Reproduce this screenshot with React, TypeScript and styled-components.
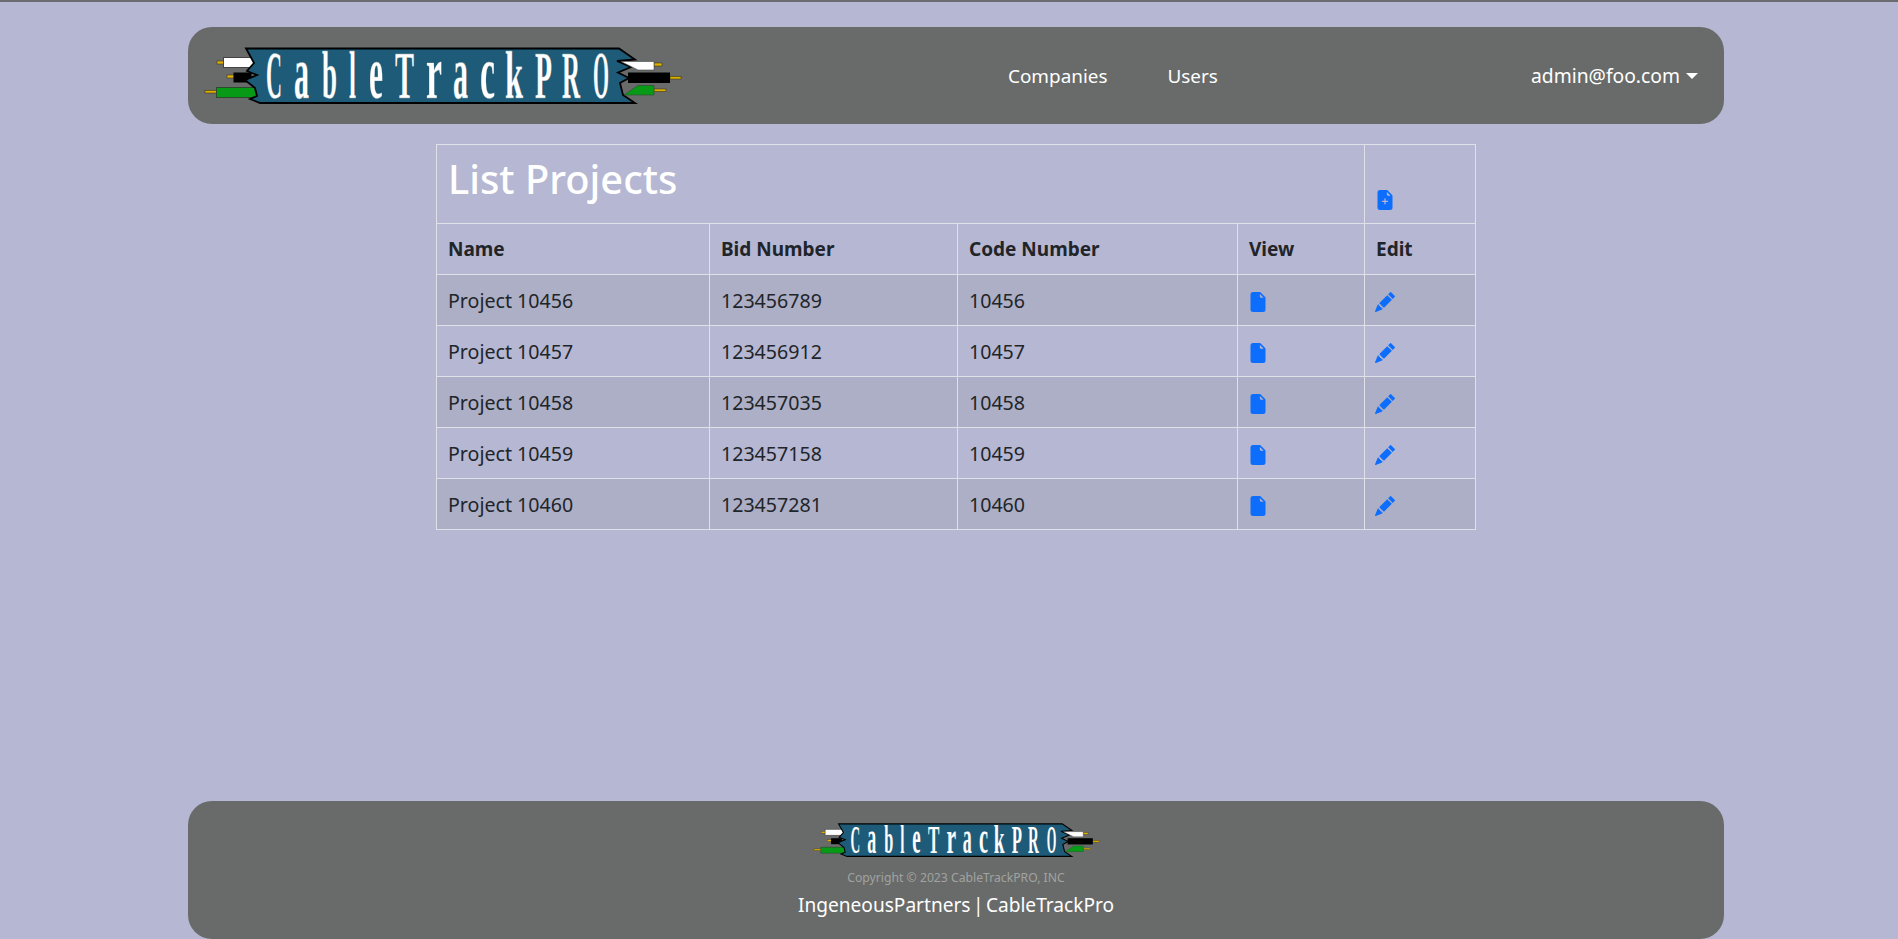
import styled, { createGlobalStyle } from "styled-components";
import { BsFileEarmarkFill, BsFileEarmarkPlusFill, BsPencilFill } from "react-icons/bs";

const GlobalStyles = createGlobalStyle`
  html, body {
    margin: 0;
    padding: 0;
    background: #b6b7d3;
    font-family: "Noto Sans", "Open Sans", sans-serif;
    color: #212529;
  }
  * {
    box-sizing: border-box;
  }
`;

const Page = styled.div`
  width: 1536px;
  height: 939px;
  margin-left: 188px;
  display: flex;
  flex-direction: column;
  align-items: center;
`;

const TopLine = styled.div`
  position: absolute;
  top: 0;
  left: 0;
  right: 0;
  height: 2px;
  background: #6b6c70;
`;

const Navbar = styled.nav`
  width: 100%;
  height: 97px;
  margin-top: 27px;
  padding: 0 26px 0 17px;
  background: #696b6a;
  border-radius: 24px;
  display: flex;
  align-items: center;
`;

const NavLinks = styled.div`
  display: flex;
  gap: 60px;
  margin-left: 326px;
`;

const NavLink = styled.a`
  color: #fff;
  font-size: 18.9px;
  text-decoration: none;
`;

const UserMenu = styled.a`
  margin-left: auto;
  color: #fff;
  font-size: 19.3px;
  display: flex;
  align-items: center;
  gap: 6px;
`;

const Caret = styled.span`
  width: 0;
  height: 0;
  border-top: 6px solid #fff;
  border-left: 6px solid transparent;
  border-right: 6px solid transparent;
`;

const Table = styled.table`
  width: 1039px;
  margin-top: 20px;
  border-collapse: collapse;
  table-layout: fixed;
  font-size: 19.6px;
`;

const Col = styled.col<{ $w: number }>`
  width: ${(p) => p.$w}px;
`;

const Cell = styled.td`
  height: 51px;
  padding: 0 11px;
  border: 1px solid #dfe1e8;
  vertical-align: middle;
`;

const HeadCell = styled(Cell).attrs({ as: "th" })`
  text-align: left;
  font-size: 19px;
  font-weight: 700;
`;

const IconCell = styled(Cell)`
  padding: 9px 10px 0;
`;

const TitleCell = styled(Cell)`
  height: 79px;
  vertical-align: top;
  padding-top: 10px;
`;

const AddCell = styled(Cell)`
  height: 79px;
  vertical-align: bottom;
  padding: 0 10px 7px;
`;

const Title = styled.h1`
  margin: 0;
  color: #fff;
  font-size: 39.8px;
  font-weight: 500;
  line-height: 48px;
`;

const Row = styled.tr<{ $striped: boolean }>`
  background: ${(p) => (p.$striped ? "#adafc6" : "transparent")};
`;

const IconLink = styled.a`
  display: inline-flex;
  color: #0d6efd;
  font-size: 20px;
`;

const Footer = styled.footer`
  width: 100%;
  height: 138px;
  margin-top: auto;
  padding-top: 22px;
  background: #696b6a;
  border-radius: 24px;
  display: flex;
  flex-direction: column;
  align-items: center;
`;

const FooterLogo = styled.div`
  margin-left: 2px;
`;

const Copyright = styled.div`
  margin-top: 12px;
  color: #a0a3a0;
  font-size: 12.2px;
  line-height: 18px;
`;

const FooterLinks = styled.div`
  margin-top: 5px;
  color: #fff;
  font-size: 19.1px;
  word-spacing: -2.5px;
  line-height: 26px;
`;

const LogoSvg = styled.svg<{ $w: number; $h: number }>`
  display: block;
  width: ${(p) => p.$w}px;
  height: ${(p) => p.$h}px;
  flex-shrink: 0;
  overflow: visible;
`;

// letter, left edge, wanted width, font advance in em, vertical stretch
const glyphs: [string, number, number, number, number][] = [
  ["C", 266, 16, 0.722, 1],
  ["a", 294, 15, 0.5, 1.12],
  ["b", 322, 15, 0.556, 1],
  ["l", 349, 7, 0.278, 1],
  ["e", 369, 14, 0.444, 1.12],
  ["T", 395, 19, 0.667, 1],
  ["r", 426, 16, 0.444, 1.12],
  ["a", 453, 15, 0.5, 1.12],
  ["c", 480, 15, 0.444, 1.12],
  ["k", 505, 18, 0.556, 1],
  ["P", 535, 17, 0.611, 1],
  ["R", 562, 18, 0.722, 1],
  ["O", 593, 16, 0.778, 1],
];

// wires and banner, coordinates follow the big navbar logo
function Logo({ w, h }: { w: number; h: number }) {
  return (
    <LogoSvg $w={w} $h={h} viewBox="205 47 477 57" preserveAspectRatio="none">
      <g fill="#e0b000" stroke="#3d3a10" strokeWidth="0.6">
        <rect x="217" y="61" width="7" height="3" />
        <rect x="227" y="75" width="7" height="3" />
        <rect x="205" y="90.5" width="12" height="2.5" />
        <rect x="654" y="63" width="8" height="3" />
        <rect x="670" y="76.5" width="11" height="2.5" />
        <rect x="654" y="89" width="12" height="2.5" />
      </g>
      <rect x="223.500" y="57.500" width="32" height="10" fill="#fff" stroke="#444" />
      <rect x="233.500" y="72.500" width="18" height="10" fill="#000" />
      <rect x="216.500" y="87.500" width="42" height="10" fill="#079a16" stroke="#2c4a2c" />
      <polygon
        points="246,48.500 619,48.500 635,59.500 617,61 631,67 618,72.500 629,78 620,83 623,95 635,103 260,103 250,99 257,96 255,88 245,80 257,75 247,71 254,63"
        fill="#1d5b79"
        stroke="#000"
        strokeWidth="1.800"
      />
      <polygon points="621,61.500 654,61.500 654,70 638,70" fill="#fff" stroke="#444" strokeWidth="0.6" />
      <rect x="628" y="72.500" width="42" height="10.500" fill="#000" />
      <polygon points="624,95 638,85.500 654,85.500 654,95" fill="#079a16" stroke="#2c4a2c" strokeWidth="0.6" />
      <g fill="#fff" stroke="#9aa" strokeWidth="0.3" fontFamily="'Liberation Serif', serif" fontWeight="700" fontSize="68">
        {glyphs.map(([ch, x, len, adv, sy], i) => (
          <text key={i} transform={`translate(${x} 98) scale(${(len / (adv * 68)).toFixed(3)} ${sy})`}>
            {ch}
          </text>
        ))}
      </g>
    </LogoSvg>
  );
}

const projects = [
  ["Project 10456", "123456789", "10456"],
  ["Project 10457", "123456912", "10457"],
  ["Project 10458", "123457035", "10458"],
  ["Project 10459", "123457158", "10459"],
  ["Project 10460", "123457281", "10460"],
];

export default function App() {
  return (
    <>
      <GlobalStyles />
      <TopLine />
      <Page>
        <Navbar>
          <Logo w={477} h={57} />
          <NavLinks>
            <NavLink>Companies</NavLink>
            <NavLink>Users</NavLink>
          </NavLinks>
          <UserMenu>
            admin@foo.com
            <Caret />
          </UserMenu>
        </Navbar>
        <Table>
          <colgroup>
            <Col $w={273} />
            <Col $w={248} />
            <Col $w={280} />
            <Col $w={127} />
            <Col $w={111} />
          </colgroup>
          <tbody>
            <tr>
              <TitleCell colSpan={4}>
                <Title>List Projects</Title>
              </TitleCell>
              <AddCell>
                <IconLink>
                  <BsFileEarmarkPlusFill />
                </IconLink>
              </AddCell>
            </tr>
            <tr>
              <HeadCell>Name</HeadCell>
              <HeadCell>Bid Number</HeadCell>
              <HeadCell>Code Number</HeadCell>
              <HeadCell>View</HeadCell>
              <HeadCell>Edit</HeadCell>
            </tr>
            {projects.map(([name, bid, code], i) => (
              <Row key={code} $striped={i % 2 === 0}>
                <Cell>{name}</Cell>
                <Cell>{bid}</Cell>
                <Cell>{code}</Cell>
                <IconCell>
                  <IconLink>
                    <BsFileEarmarkFill />
                  </IconLink>
                </IconCell>
                <IconCell>
                  <IconLink>
                    <BsPencilFill />
                  </IconLink>
                </IconCell>
              </Row>
            ))}
          </tbody>
        </Table>
        <Footer>
          <FooterLogo>
            <Logo w={286} h={34} />
          </FooterLogo>
          <Copyright>Copyright © 2023 CableTrackPRO, INC</Copyright>
          <FooterLinks>IngeneousPartners | CableTrackPro</FooterLinks>
        </Footer>
      </Page>
    </>
  );
}
